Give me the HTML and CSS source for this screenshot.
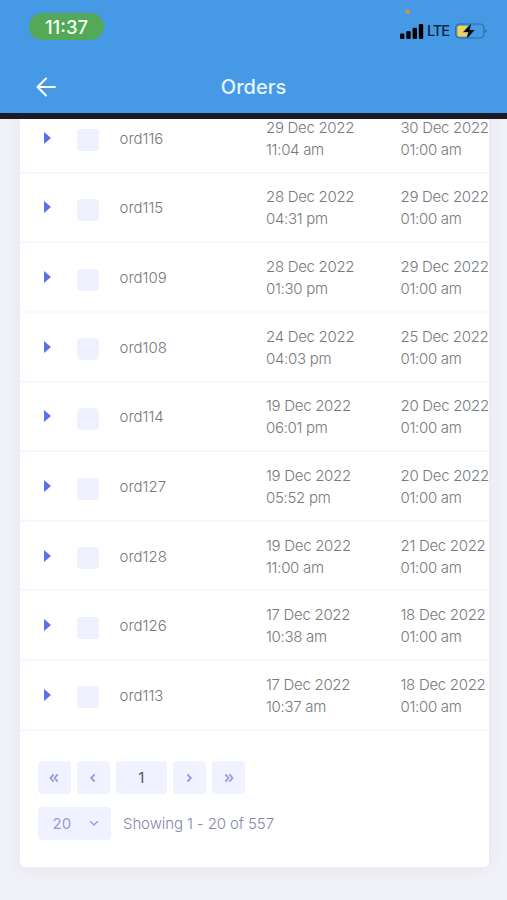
FILE: index.html
```html
<!DOCTYPE html>
<html lang="en">

<head>
    <meta charset="UTF-8">
    <meta name="viewport" content="width=device-width, initial-scale=1.0">
    <title>Orders</title>
    <link rel="stylesheet" href="styles.css">
</head>

<body>

    <header>
        <div class="status-bar">
            <span class="clock">11:37</span>
            <div class="status-icons">
                <span class="mic-dot"></span>
                <svg class="signal" width="24" height="15" viewBox="0 0 24 15">
                    <rect x="0" y="9.5" width="4.4" height="5.5" rx="1.3" />
                    <rect x="6.3" y="7" width="4.4" height="8" rx="1.3" />
                    <rect x="12.6" y="3.8" width="4.4" height="11.2" rx="1.3" />
                    <rect x="18.8" y="0" width="4.4" height="15" rx="1.3" />
                </svg>
                <span class="network">LTE</span>
                <svg class="battery" width="33" height="18" viewBox="0 0 33 18">
                    <rect x="0.7" y="2" width="28.2" height="14" rx="4" fill="none" stroke="#2f6b9c" stroke-width="1.2" />
                    <path d="M4 3.7h9.5v10.8H4a1.6 1.6 0 0 1-1.6-1.6V5.3A1.6 1.6 0 0 1 4 3.7z" fill="#f7d154" />
                    <path d="M30.3 7v4.2c2-.8 2-3.4 0-4.2z" fill="#2f6b9c" />
                    <path d="M16.4 1.2 8.6 10h4.9l-1.9 7 8-9h-5z" fill="#050a10" stroke="#469ae5" stroke-width="1.2" paint-order="stroke" />
                </svg>
            </div>
        </div>
        <div class="title-bar">
            <a href="#" class="back" aria-label="Back">
                <svg width="20" height="20" viewBox="0 0 20 20" fill="none" stroke="#fff" stroke-width="2" stroke-linecap="round" stroke-linejoin="round">
                    <path d="M18.8 10H1.5M10 1.5 1.5 10l8.5 8.5" />
                </svg>
            </a>
            <h1>Orders</h1>
        </div>
    </header>

    <main>
        <div class="card">
            <div class="orders">
                <div class="order">
                    <span class="caret"></span><span class="check"></span><span class="order-id">ord116</span>
                    <span class="date">29 Dec 2022<br>11:04 am</span>
                    <span class="date">30 Dec 2022<br>01:00 am</span>
                </div>
                <div class="order">
                    <span class="caret"></span><span class="check"></span><span class="order-id">ord115</span>
                    <span class="date">28 Dec 2022<br>04:31 pm</span>
                    <span class="date">29 Dec 2022<br>01:00 am</span>
                </div>
                <div class="order">
                    <span class="caret"></span><span class="check"></span><span class="order-id">ord109</span>
                    <span class="date">28 Dec 2022<br>01:30 pm</span>
                    <span class="date">29 Dec 2022<br>01:00 am</span>
                </div>
                <div class="order">
                    <span class="caret"></span><span class="check"></span><span class="order-id">ord108</span>
                    <span class="date">24 Dec 2022<br>04:03 pm</span>
                    <span class="date">25 Dec 2022<br>01:00 am</span>
                </div>
                <div class="order">
                    <span class="caret"></span><span class="check"></span><span class="order-id">ord114</span>
                    <span class="date">19 Dec 2022<br>06:01 pm</span>
                    <span class="date">20 Dec 2022<br>01:00 am</span>
                </div>
                <div class="order">
                    <span class="caret"></span><span class="check"></span><span class="order-id">ord127</span>
                    <span class="date">19 Dec 2022<br>05:52 pm</span>
                    <span class="date">20 Dec 2022<br>01:00 am</span>
                </div>
                <div class="order">
                    <span class="caret"></span><span class="check"></span><span class="order-id">ord128</span>
                    <span class="date">19 Dec 2022<br>11:00 am</span>
                    <span class="date">21 Dec 2022<br>01:00 am</span>
                </div>
                <div class="order">
                    <span class="caret"></span><span class="check"></span><span class="order-id">ord126</span>
                    <span class="date">17 Dec 2022<br>10:38 am</span>
                    <span class="date">18 Dec 2022<br>01:00 am</span>
                </div>
                <div class="order">
                    <span class="caret"></span><span class="check"></span><span class="order-id">ord113</span>
                    <span class="date">17 Dec 2022<br>10:37 am</span>
                    <span class="date">18 Dec 2022<br>01:00 am</span>
                </div>
            </div>

            <div class="pagination">
                <button aria-label="First page">
                    <svg width="10" height="10" viewBox="0 0 10 10"><path d="M4.7 1.3 1.5 5l3.2 3.7M8.7 1.3 5.5 5l3.2 3.7" /></svg>
                </button>
                <button aria-label="Previous page">
                    <svg width="10" height="10" viewBox="0 0 10 10"><path d="M6.6 1.3 3.2 5l3.4 3.7" /></svg>
                </button>
                <span class="page">1</span>
                <button aria-label="Next page">
                    <svg width="10" height="10" viewBox="0 0 10 10"><path d="M3.4 1.3 6.8 5 3.4 8.7" /></svg>
                </button>
                <button aria-label="Last page">
                    <svg width="10" height="10" viewBox="0 0 10 10"><path d="M1.3 1.3 4.5 5 1.3 8.7M5.3 1.3 8.5 5 5.3 8.7" /></svg>
                </button>
            </div>

            <div class="page-size">
                <div class="select">
                    <span>20</span>
                    <svg width="10" height="7" viewBox="0 0 10 7"><path d="M1.2 1.3 5 5l3.8-3.7" /></svg>
                </div>
                <span class="showing">Showing 1 - 20 of 557</span>
            </div>
        </div>
    </main>

</body>

</html>
```
FILE: styles.css
```css
* {
    box-sizing: border-box;
}

body {
    font-family: 'Inter', 'Liberation Sans', sans-serif;
    margin: 0;
    height: 900px;
    display: flex;
    flex-direction: column;
    background-color: #f1f2f7;
    overflow: hidden;
}

header {
    flex: none;
    height: 119px;
    background-color: #469ae5;
    border-bottom: 6px solid #1a1b29;
}

.status-bar {
    height: 60px;
    display: flex;
    justify-content: space-between;
    align-items: flex-start;
    padding: 13px 19px 0 29px;
}

.clock {
    width: 75px;
    height: 27px;
    border-radius: 14px;
    background-color: #54a958;
    color: #f4fff2;
    font-size: 18.5px;
    font-weight: 500;
    line-height: 28px;
    text-align: center;
}

.status-icons {
    position: relative;
    height: 36px;
    display: flex;
    align-items: center;
}

.mic-dot {
    position: absolute;
    left: 5px;
    top: -4px;
    width: 5px;
    height: 5px;
    border-radius: 50%;
    background-color: #b79a52;
}

.network {
    margin: 0 7px 0 3px;
    width: 21px;
    font-size: 14.5px;
    letter-spacing: -1px;
    line-height: 18px;
    font-weight: 500;
    color: #0c2640;
}

.title-bar {
    height: 53px;
    display: grid;
    grid-template-columns: 36px 1fr 36px;
    align-items: center;
    padding: 0 36px;
}

.back {
    display: flex;
}

.title-bar h1 {
    margin: 0;
    text-align: center;
    font-size: 20px;
    font-weight: 500;
    color: #e4f4ff;
}

main {
    flex: 1;
    min-height: 0;
    overflow: hidden;
    padding: 0 18.5px 0 19.5px;
}

.card {
    height: 763px;
    margin-top: -15px;
    background-color: #fff;
    border-radius: 5px;
    box-shadow: 0 3px 18px rgba(60, 40, 60, 0.06);
    overflow: hidden;
}

.order {
    height: 69.65px;
    display: grid;
    grid-template-columns: 33px 42.5px 146.5px 134.5px 134px;
    align-items: center;
    padding-left: 24.5px;
    border-bottom: 2px solid #f7f8fb;
    color: #77797e;
    font-size: 15px;
    font-weight: 300;
    line-height: 22px;
}

.caret {
    width: 0;
    height: 0;
    border-top: 6.5px solid transparent;
    border-bottom: 6.5px solid transparent;
    border-left: 7.5px solid #5a70ec;
}

.check {
    width: 22px;
    height: 22px;
    margin-top: 5px;
    border-radius: 4px;
    background-color: #f0f1ff;
}

.order-id {
    margin-top: 2px;
}

.date {
    margin-top: 2px;
    letter-spacing: -0.3px;
    white-space: nowrap;
}

.pagination {
    display: flex;
    gap: 6px;
    padding: 30.5px 18px 0;
}

.pagination button,
.page {
    width: 33.2px;
    height: 33px;
    padding: 0;
    border: none;
    border-radius: 4px;
    background-color: #f0f2ff;
    display: flex;
    align-items: center;
    justify-content: center;
}

.pagination .page {
    width: 51px;
    font-size: 15px;
    color: #55565d;
}

.pagination svg,
.select svg {
    fill: none;
    stroke: #9a9ddd;
    stroke-width: 1.9;
}

.select svg {
    stroke-width: 1.5;
}

.page-size {
    display: flex;
    align-items: center;
    gap: 12px;
    padding: 12.5px 18px 0;
}

.select {
    width: 73.5px;
    height: 33px;
    display: flex;
    align-items: center;
    justify-content: space-between;
    padding: 0 12px 0 15px;
    border-radius: 4px;
    background-color: #f0f2ff;
    color: #999cd8;
    font-size: 15px;
}

.showing {
    color: #8587aa;
    font-size: 15px;
    font-weight: 300;
    letter-spacing: -0.1px;
}
```
